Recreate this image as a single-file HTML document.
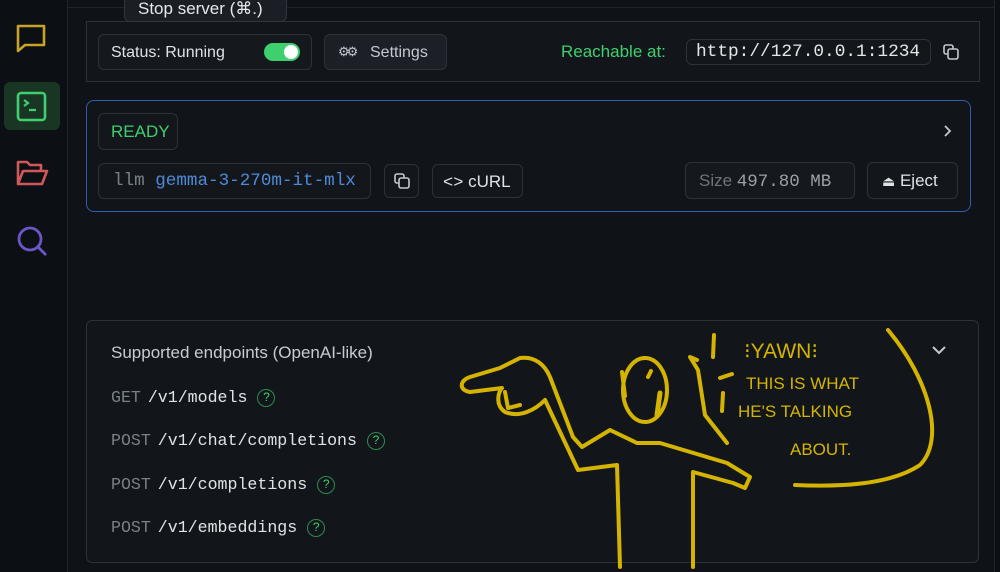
<!DOCTYPE html>
<html><head><style>
*{box-sizing:border-box;margin:0;padding:0}
body{width:1000px;height:572px;background:#0f1318;font-family:"Liberation Sans",sans-serif;position:relative;overflow:hidden;color:#d6d9de}
.abs{position:absolute}
.side{left:0;top:0;width:68px;height:572px;background:#0c0f13;border-right:1px solid #1f242b}
.box{position:absolute;border:1px solid #2c323a;border-radius:6px;background:#13171c}
.mono{font-family:"Liberation Mono",monospace}
.ep{position:absolute;left:111px;font-size:16.6px;line-height:20px;color:#e0e3e6;font-family:"Liberation Mono",monospace;word-spacing:-3px}
.ep b{font-weight:normal;color:#7a8088}
.q{display:inline-block;width:18px;height:18px;border:1.5px solid #2d8a4f;border-radius:50%;font-family:"Liberation Sans";font-size:12px;line-height:15px;text-align:center;color:#3ecf6e;vertical-align:1px;margin-left:10px}
</style></head><body>
<div class="abs" style="left:0;top:0;width:1000px;height:8px;border-bottom:1px solid #1e232a"></div>
<div class="abs side"></div>
<div class="abs" style="left:994px;top:0;width:6px;height:572px;background:#0c0f13;border-left:1px solid #1f242b"></div>
<svg class="abs" style="left:14px;top:22px" width="36" height="36" viewBox="0 0 36 36"><path d="M4 4h26v19H11l-7 6z" fill="none" stroke="#c9a227" stroke-width="2.6" stroke-linejoin="round"/></svg>
<div class="abs" style="left:4px;top:82px;width:56px;height:48px;background:#193524;border-radius:6px"></div>
<svg class="abs" style="left:16px;top:91px" width="32" height="32" viewBox="0 0 32 32"><rect x="2" y="2" width="27" height="27" rx="3" fill="none" stroke="#3ecf6e" stroke-width="2.6"/><path d="M8 9l4 3-4 3M13 19h7" fill="none" stroke="#3ecf6e" stroke-width="2.2"/></svg>
<svg class="abs" style="left:15px;top:158px" width="34" height="30" viewBox="0 0 34 30"><path d="M3 26V4h9l3 3h11v5M3 26l5-13h24l-5 13z" fill="none" stroke="#d0585a" stroke-width="2.6" stroke-linejoin="round"/></svg>
<svg class="abs" style="left:15px;top:224px" width="34" height="34" viewBox="0 0 34 34"><circle cx="15" cy="15" r="11" fill="none" stroke="#6b56c8" stroke-width="2.8"/><path d="M23 23l8 8" stroke="#6b56c8" stroke-width="2.8"/></svg>
<div class="box" style="left:86px;top:21px;width:894px;height:61px;border-radius:0;background:#12161b"></div>
<div class="abs" style="left:124px;top:-6px;width:163px;height:28px;background:#1b1f25;border:1px solid #30363e;border-radius:6px;color:#e6e8eb;font-size:17px;padding:4px 13px 0">Stop server (⌘.)</div>
<div class="box" style="left:98px;top:34px;width:214px;height:36px;background:#15191e;font-size:16px;padding:9px 12px;color:#dfe2e6">Status: Running</div>
<div class="abs" style="left:264px;top:43px;width:36px;height:18px;border-radius:9px;background:#3ecf6e"></div>
<div class="abs" style="left:284px;top:45px;width:14px;height:14px;border-radius:7px;background:#fff"></div>
<div class="box" style="left:324px;top:34px;width:123px;height:36px;background:#1c2026;font-size:16px;padding:9px 0 0 45px;color:#c5c9cf">Settings</div>
<div class="abs" style="left:338px;top:44px;color:#c5c9cf;font-size:13px;letter-spacing:-3px">⚙⚙</div>
<div class="abs" style="left:561px;top:42px;font-size:17px;color:#3ecf6e">Reachable at:</div>
<div class="box mono" style="left:686px;top:39px;width:245px;height:26px;font-size:17.8px;padding:2px 9px;color:#e4e6e9">http://127.0.0.1:1234</div>
<svg class="abs" style="left:942px;top:43px" width="18" height="18" viewBox="0 0 18 18"><rect x="2" y="2" width="9" height="9" rx="2" fill="none" stroke="#c5c9cf" stroke-width="1.6"/><rect x="6" y="6" width="10" height="10" rx="2" fill="#12161b" stroke="#c5c9cf" stroke-width="1.6"/></svg>
<div class="abs" style="left:86px;top:100px;width:885px;height:112px;border:1.5px solid #2f5eb0;border-radius:8px;background:#11151a"></div>
<div class="box" style="left:98px;top:113px;width:80px;height:37px;color:#3ecf6e;font-size:17px;padding:8px 12px;background:#13171c">READY</div>
<svg class="abs" style="left:942px;top:124px" width="12" height="14"><path d="M3 2l5 5-5 5" fill="none" stroke="#c5c9cf" stroke-width="1.8"/></svg>
<div class="box mono" style="left:98px;top:163px;width:273px;height:36px;font-size:17.6px;padding:7px 14px;color:#7a8088">llm <span style="color:#4f8ad8">gemma-3-270m-it-mlx</span></div>
<div class="box" style="left:384px;top:164px;width:35px;height:34px"></div>
<svg class="abs" style="left:393px;top:172px" width="18" height="18" viewBox="0 0 18 18"><rect x="2" y="2" width="9" height="9" rx="2" fill="none" stroke="#c5c9cf" stroke-width="1.6"/><rect x="6" y="6" width="10" height="10" rx="2" fill="#13171c" stroke="#c5c9cf" stroke-width="1.6"/></svg>
<div class="box" style="left:432px;top:164px;width:91px;height:34px;font-size:17px;padding:7px 10px;color:#e0e3e6"><span class="mono">&lt;&gt;</span> cURL</div>
<div class="box" style="left:685px;top:162px;width:170px;height:37px;background:#15191e;padding:8px 13px;font-size:17px;color:#6e747c">Size <span class="mono" style="color:#9ba0a7;font-size:17.5px">497.80 MB</span></div>
<div class="box" style="left:867px;top:162px;width:91px;height:37px;font-size:17px;padding:8px 0 0 14px;color:#e0e3e6"><span style="font-size:14px">⏏</span> Eject</div>
<div class="box" style="left:86px;top:320px;width:893px;height:243px;background:#12161b"></div>
<div class="abs" style="left:111px;top:343px;font-size:17px;color:#c8ccd1">Supported endpoints (OpenAI-like)</div>
<svg class="abs" style="left:930px;top:343px" width="18" height="14"><path d="M3 4l6 6 6-6" fill="none" stroke="#c5c9cf" stroke-width="2"/></svg>
<div class="ep" style="top:388px"><b>GET</b> /v1/models<span class="q">?</span></div>
<div class="ep" style="top:431px"><b>POST</b> /v1/chat/completions<span class="q">?</span></div>
<div class="ep" style="top:475px"><b>POST</b> /v1/completions<span class="q">?</span></div>
<div class="ep" style="top:518px"><b>POST</b> /v1/embeddings<span class="q">?</span></div>
<svg class="abs" style="left:0;top:0" width="1000" height="572" viewBox="0 0 1000 572">
<g fill="none" stroke="#d4b400" stroke-width="4" stroke-linecap="round" stroke-linejoin="round">
<path d="M620 567L617 465L578 470L545 400"/>
<path d="M545 400C535 410 520 418 505 412C495 405 498 392 502 388L470 392C458 390 460 380 470 377L500 368L520 358C535 356 545 365 550 377L573 437L582 447L610 430L637 443L660 443L727 463L750 477L745 488L733 483L693 472L693 567"/>
<path d="M505 392L508 408L520 405"/>
<path d="M727 443L705 415L698 370L690 357L697 360"/>
<ellipse cx="645" cy="390" rx="22" ry="32"/>
<path d="M622 372L625 396"/>
<path d="M651 371l-3 6"/>
<path d="M660 393l-3 22" stroke-width="5"/>
<path d="M714 335l-1 22M720 378l12 -4M723 393l-1 18"/>
<path d="M888 330C930 380 945 440 920 465C890 485 840 487 795 485"/>
</g>
<g fill="#d4b400" font-family="Liberation Sans" font-size="17">
<text x="744" y="358" font-size="21">⁝YAWN⁝</text>
<text x="746" y="389">THIS IS WHAT</text>
<text x="738" y="417">HE'S TALKING</text>
<text x="790" y="455">ABOUT.</text>
</g>
</svg>
</body></html>
